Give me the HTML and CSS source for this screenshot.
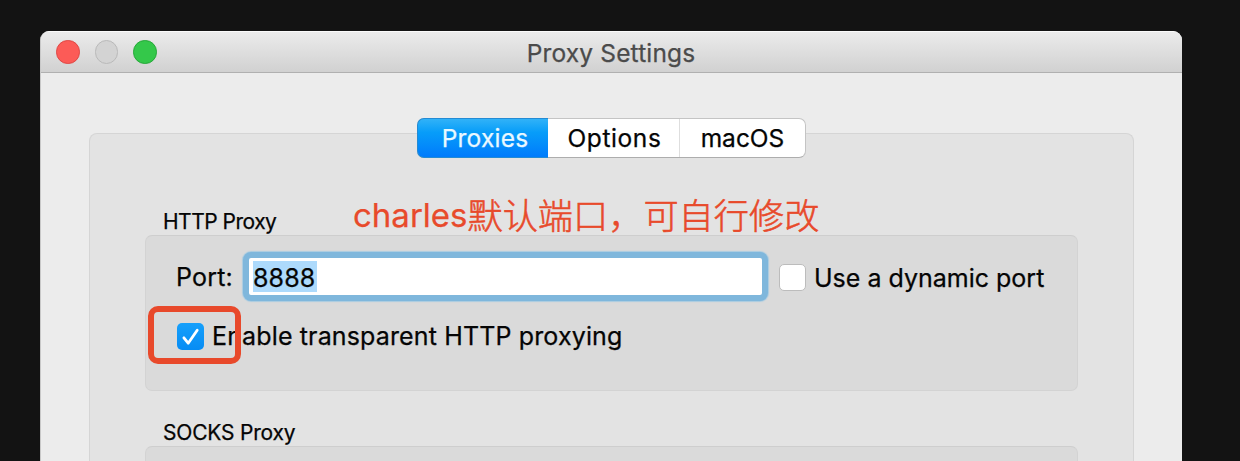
FILE: index.html
```html
<!DOCTYPE html>
<html lang="en">
<head>
<meta charset="utf-8">
<title>Proxy Settings</title>
<link rel="stylesheet" href="styles.css">
</head>
<body>
<main class="window">
  <header class="titlebar">
    <div class="lights"><i class="light close"></i><i class="light minimize"></i><i class="light zoom"></i></div>
    <h1 class="title"><span>Proxy Settings</span></h1>
  </header>
  <div class="content">
    <nav class="tabs">
      <div class="tab active"><span>Proxies</span></div>
      <div class="tab options"><span>Options</span></div>
      <div class="tab macos"><span>macOS</span></div>
    </nav>
    <section class="panel">
      <h2 class="legend http"><span>HTTP Proxy</span></h2>
      <div class="group">
        <div class="row port-row">
          <span class="label port">Port:</span>
          <div class="field"><span class="selection">8888</span></div>
          <i class="checkbox"></i>
          <span class="label dynamic">Use a dynamic port</span>
        </div>
        <div class="row enable-row">
          <i class="checkbox checked"><svg width="27" height="27" viewBox="0 0 27 27"><path d="M6.9 14.8L11.2 20.2L20.2 7.2" fill="none" stroke="#fff" stroke-width="2.8" stroke-linecap="round" stroke-linejoin="round"/></svg></i>
          <span class="label enable">Enable transparent HTTP proxying</span>
        </div>
      </div>
      <h2 class="legend socks"><span>SOCKS Proxy</span></h2>
      <div class="group last"></div>
    </section>
  </div>
  <div class="note"><span class="latin">charles</span><span class="cjk" lang="zh-CN">默认端口，可自行修改</span></div>
  <div class="marker"></div>
</main>
</body>
</html>
```
FILE: styles.css
```css
* { box-sizing: border-box; }
body {
  margin: 0;
  height: 461px;
  overflow: hidden;
  padding: 31px 58px 0 40px;
  background: #131313;
  font-family: Inter, "Noto Sans CJK SC", sans-serif;
  color: #050505;
  -webkit-text-stroke: 0.25px currentColor;
}
.window {
  position: relative;
  display: flex;
  flex-direction: column;
  height: 430px;
  border-radius: 9px 9px 0 0;
  overflow: hidden;
  background: #ececec;
  border-left: 1px solid #c8c8c8;
}
.titlebar {
  flex: none;
  height: 42px;
  display: grid;
  grid-template-columns: 1fr auto 1fr;
  align-items: center;
  background: linear-gradient(#ebebeb, #d1d1d1);
  border-top: 1px solid #fafafa;
  border-bottom: 1px solid #b0b0b0;
}
.lights { display: flex; gap: 15px; padding-left: 15px; }
.light { width: 23.5px; height: 23.5px; border-radius: 50%; border: 1px solid; }
.close { background: #fc5b57; border-color: #df4744; }
.minimize { background: #d3d3d3; border-color: #b9b9b9; }
.zoom { background: #34c84a; border-color: #25a738; }
.title { margin: 0 1px 0 0; padding-top: 1px; font-size: 24.5px; font-weight: 400; line-height: 30px; color: #4b4b4b; letter-spacing: 0.15px; }
.content { flex: 1; display: flex; flex-direction: column; min-height: 0; padding: 45px 48px 0; }
.tabs {
  position: relative;
  flex: none;
  display: flex;
  width: 389px;
  height: 40px;
  margin: 0 0 -25px 328px;
  border: 1px solid #c4c4c4;
  border-bottom-color: #adadad;
  border-radius: 7px;
  background: #fff;
}
.tab {
  display: flex;
  align-items: center;
  justify-content: center;
  font-size: 24.5px;
  line-height: 30px;
}
.active {
  width: 131px;
  margin: -1px 0 -1px -1px;
  padding-left: 4px;
  color: #e9f8ff;
  background: linear-gradient(#31b2f8, #079df9 35%, #007bfc);
  border: 1px solid #238bd4;
  border-right: 0;
  border-radius: 7px 0 0 7px;
  letter-spacing: 0.2px;
}
.options { width: 132px; border-right: 1px solid #dedede; letter-spacing: 0.6px; padding-left: 2px; }
.macos { width: 125px; }
.panel {
  flex: 1;
  display: flex;
  flex-direction: column;
  min-height: 0;
  padding: 74px 55px 0;
  border: 1px solid #d5d5d5;
  border-bottom: 0;
  border-radius: 8px 8px 0 0;
  background: #e3e3e3;
}
.legend {
  flex: none;
  margin: 0;
  padding-left: 18px;
  height: 27px;
  font-size: 21px;
  font-weight: 400;
  line-height: 28px;
}
.http { letter-spacing: -0.5px; }
.socks { margin-top: 28px; letter-spacing: -0.2px; }
.group {
  flex: none;
  height: 156px;
  border: 1px solid #d3d3d3;
  border-top-color: #cecece;
  border-radius: 7px;
  background: #dadada;
}
.last { flex: 1; height: auto; min-height: 0; border-bottom: 0; border-radius: 7px 7px 0 0; }
.row { display: flex; align-items: center; }
.label { font-size: 25px; line-height: 32px; white-space: nowrap; }
.port-row { padding: 16px 0 0 30px; }
.port { width: 67px; padding-top: 1px; letter-spacing: 0.2px; }
.field {
  width: 525px;
  height: 49px;
  padding: 3px 4px;
  border: 6px solid #7fb7dc;
  border-radius: 8px;
  background: #fff;
  box-shadow: 0 0 1px 1px #a9cbe0;
}
.selection { display: block; width: 64px; height: 31px; background: #addafc; font-size: 25px; line-height: 34px; letter-spacing: 0.1px; }
.dynamic { padding-top: 3px; }
.checkbox {
  width: 27px;
  height: 27px;
  margin: 2px 8px 0 11px;
  flex: none;
  border: 1px solid #bcbcbc;
  border-radius: 5px;
  background: #fff;
}
.checked { margin: 0 8px 0 31px; border: 0; background: linear-gradient(#16a0fb, #078cf4); }
.checked svg { display: block; }
.enable-row { padding-top: 19px; }
.enable { letter-spacing: 0.14px; }
.note {
  position: absolute;
  left: 312px;
  top: 160px;
  display: flex;
  align-items: center;
  height: 50px;
  color: #e84a2b;
  white-space: nowrap;
}
.latin { padding-bottom: 2px; font-size: 33px; }
.cjk { padding-bottom: 6px; font-family: "Noto Sans CJK SC", sans-serif; font-size: 35.2px; font-weight: 300; -webkit-text-stroke: 0.55px currentColor; }
.marker {
  position: absolute;
  left: 107px;
  top: 275px;
  width: 93px;
  height: 58px;
  border: 6px solid #e8492b;
  border-radius: 10px;
}
```
